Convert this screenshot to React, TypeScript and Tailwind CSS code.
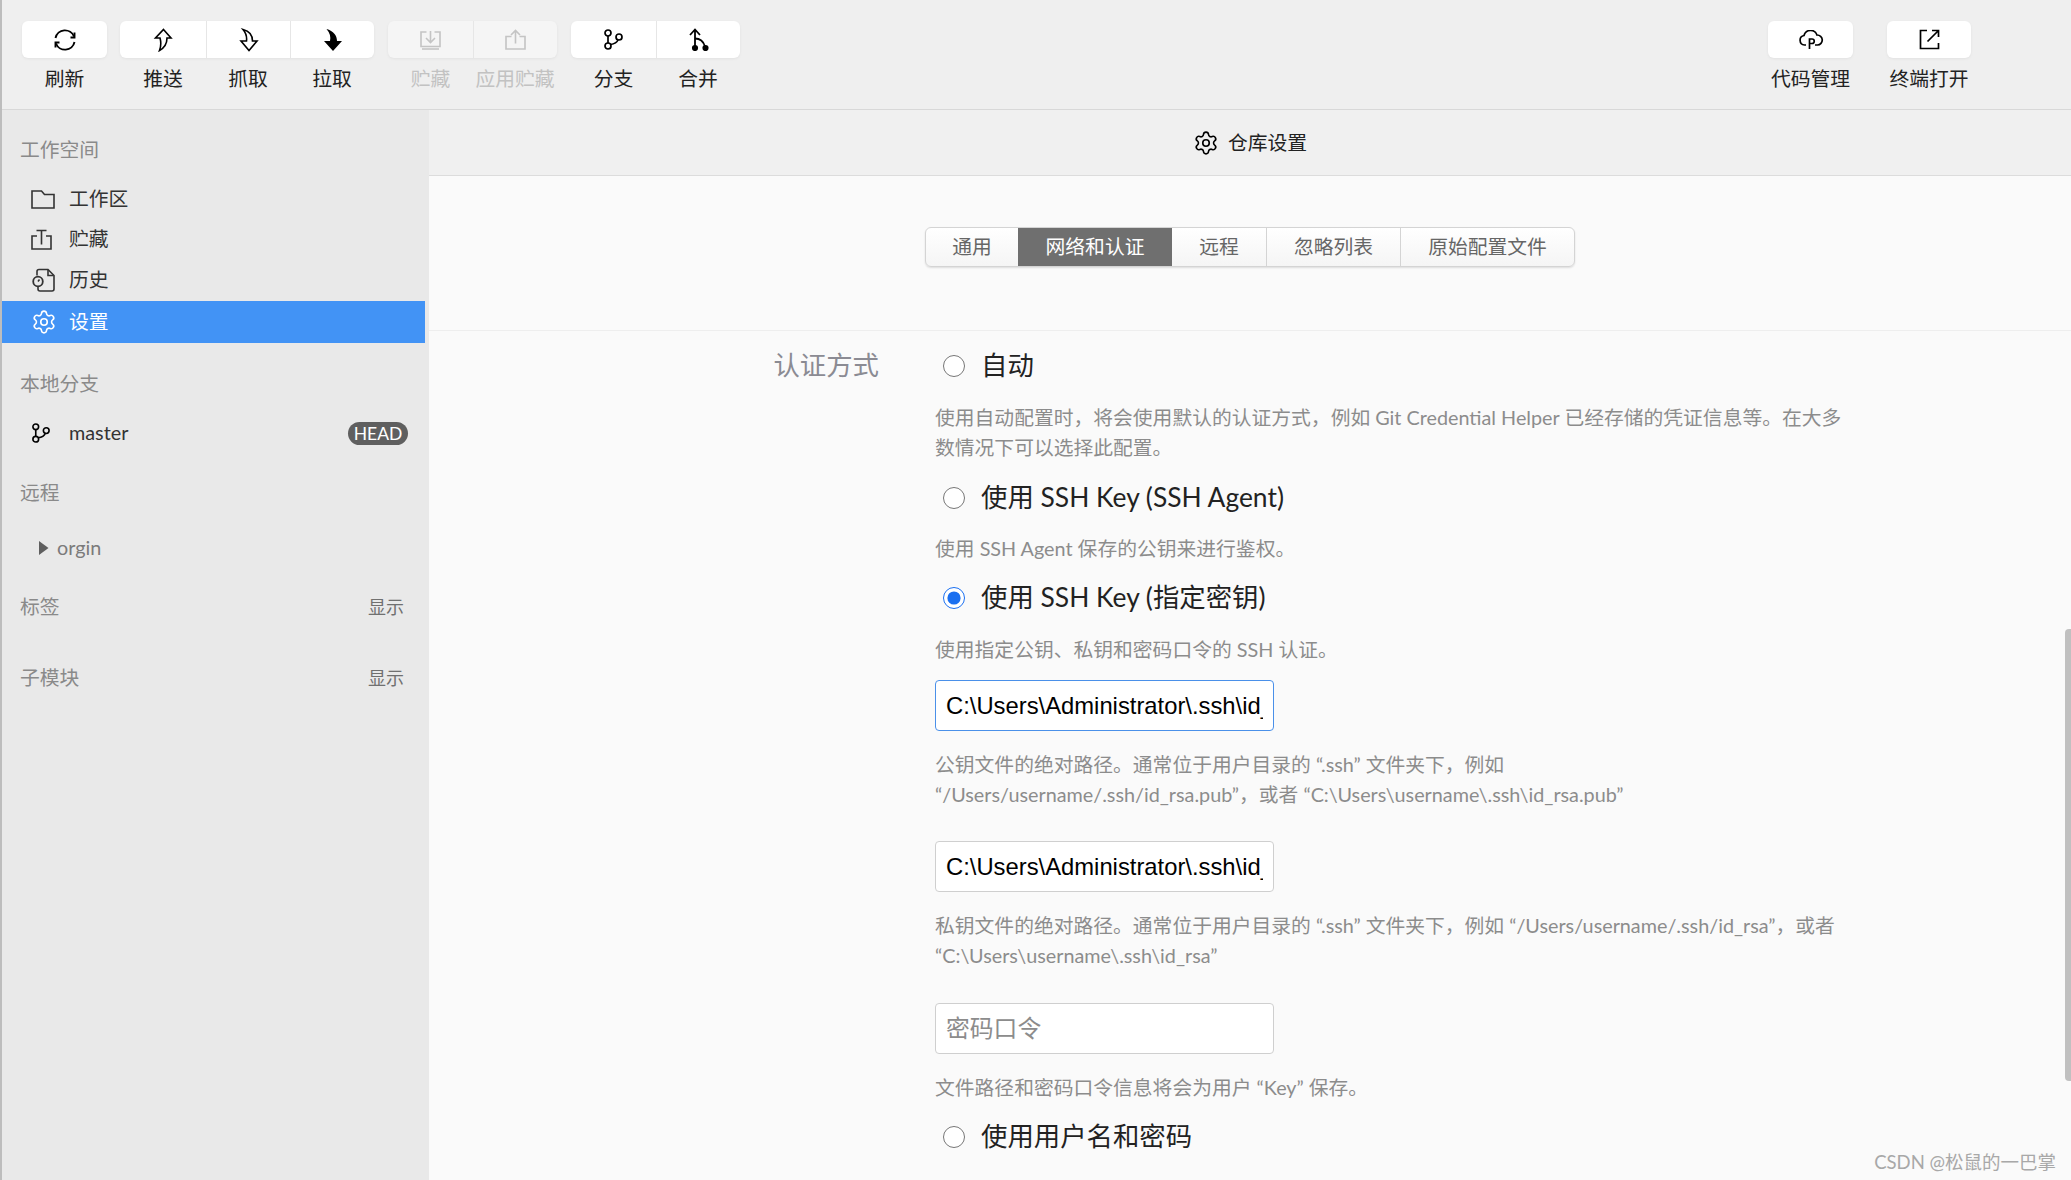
import React from 'react';
import { Settings } from 'lucide-react';

const stroke = { fill: 'none', stroke: 'currentColor', strokeWidth: 1.6 };

const RefreshIcon = () => (
  <svg width="24" height="24" viewBox="0 0 24 24" {...stroke} strokeWidth={1.9}>
    <path d="M2.5 10A9.7 9.7 0 0 1 21 8.5" />
    <path d="M21.5 14A9.7 9.7 0 0 1 3 15.5" />
    <path d="M21.5 4.5v5h-4" />
    <path d="M2.5 19.5v-5h4" />
  </svg>
);
const PushIcon = () => (
  <svg width="20" height="24" viewBox="0 0 20 24" {...stroke}>
    <path d="M10.5 1.5 18 10h-4c0 5-2 9.5-7.5 12.5 1.5-4 1.5-9 .5-12.5H2.5z" />
  </svg>
);
const FetchIcon = () => (
  <svg width="20" height="24" viewBox="0 0 20 24" {...stroke}>
    <path d="M4 1.5C10 3 13.5 7.500 13.500 13H18l-8 9.500L2 13h5.500C8 9 7 5 4 1.500z" />
  </svg>
);
const PullIcon = () => (
  <svg width="20" height="24" viewBox="0 0 20 24" fill="currentColor">
    <path d="M3.500 1C10.500 3 14 7.500 14 13h5l-9 10-9-10h6C8 9 7 5 3.500 1z" />
  </svg>
);
const StashInIcon = () => (
  <svg width="21" height="20" viewBox="0 0 21 20" {...stroke}>
    <path d="M6.500 2H1v14.500h19V2h-5.500" />
    <path d="M2 19h17" />
    <path d="M10.500 1v11M6 8l4.500 4.500L15 8" />
  </svg>
);
const StashOutIcon = () => (
  <svg width="21" height="21" viewBox="0 0 21 21" {...stroke}>
    <path d="M6.500 7.500H1V20h19V7.500h-5.500" />
    <path d="M10.500 14.500V1.500M6 6l4.500-4.500L15 6" />
  </svg>
);
const BranchIcon = ({ size = 21 }: { size?: number }) => (
  <svg width={size} height={size} viewBox="0 0 21 21" {...stroke} strokeWidth={1.7}>
    <circle cx="5" cy="4" r="3" />
    <circle cx="5" cy="17" r="3" />
    <circle cx="16" cy="8" r="3" />
    <path d="M5 7v7M15 11c-1 2.500-4 4-7.500 4.500" />
  </svg>
);
const MergeIcon = () => (
  <svg width="21" height="23" viewBox="0 0 21 23" {...stroke} strokeWidth={1.8}>
    <path d="M7 1.500V19M2 7l5-5.500L12 7" />
    <path d="M7 10.500c4.500 0 8.500 3 10 8" />
    <circle cx="7" cy="20" r="2.200" fill="currentColor" />
    <circle cx="17.500" cy="20" r="2.200" fill="currentColor" />
  </svg>
);
const CloudIcon = () => (
  <svg width="26" height="20" viewBox="0 0 26 20" {...stroke} strokeWidth={1.7}>
    <path d="M8 15H6.500a4.800 4.800 0 0 1-.5-9.500 6.800 6.800 0 0 1 13-.5 5 5 0 0 1 .5 10H17" />
    <path d="M11.500 19V9h2.500a2.200 2.200 0 0 1 0 4.500h-2.500" />
  </svg>
);
const OpenIcon = () => (
  <svg width="21" height="21" viewBox="0 0 21 21" {...stroke} strokeWidth={1.7}>
    <path d="M8 1.500H1.500v18h18V14" />
    <path d="M8.500 12.500 19.500 1.500M13 1.500h6.500V8" />
  </svg>
);
const FolderIcon = () => (
  <svg width="24" height="19" viewBox="0 0 24 19" {...stroke}>
    <path d="M1 1h9.500l3 3.500H23V18H1z" />
  </svg>
);
const StashIcon = () => (
  <svg width="21" height="21" viewBox="0 0 21 21" {...stroke}>
    <path d="M6 7H1v13h19V7h-5" />
    <path d="M10.500 15.500V1.500M5.500 1.500h10" />
  </svg>
);
const HistoryIcon = () => (
  <svg width="24" height="24" viewBox="0 0 24 24" {...stroke}>
    <path d="M5 7.500V3.500a2 2 0 0 1 2-2h9l6 6V21a2 2 0 0 1-2 2H8a2 2 0 0 1-2-2v-2" />
    <path d="M16 2v5.500h5.500" />
    <circle cx="6" cy="13.500" r="4.800" strokeWidth={1.8} />
    <path d="M6 13.500l1.500-2" />
  </svg>
);

const toolbarGroups = [
  [{ label: '刷新', w: 'w-[85px]', icon: <RefreshIcon /> }],
  [
    { label: '推送', w: 'w-[86px]', icon: <PushIcon /> },
    { label: '抓取', w: 'w-[84px]', icon: <FetchIcon /> },
    { label: '拉取', w: 'w-[84px]', icon: <PullIcon /> },
  ],
];
const disabledGroup = [
  { label: '贮藏', w: 'w-[85px]', icon: <StashInIcon /> },
  { label: '应用贮藏', w: 'w-[84px]', icon: <StashOutIcon /> },
];
const branchGroup = [
  { label: '分支', w: 'w-[85px]', icon: <BranchIcon /> },
  { label: '合并', w: 'w-[84px]', icon: <MergeIcon /> },
];

type ToolItem = { label: string; w: string; icon: React.ReactNode };

const ToolGroup = ({ items, disabled }: { items: ToolItem[]; disabled?: boolean }) => (
  <div className="flex flex-col">
    <div className={`flex h-[37px] rounded-md shadow-[0_1px_3px_rgba(0,0,0,0.06)] ${disabled ? 'bg-[#f5f5f5] text-[#c4c4c4]' : 'bg-white text-black'}`}>
      {items.map((item, i) => (
        <div key={item.label} className={`${item.w} flex items-center justify-center ${i > 0 ? 'border-l border-[#e6e6e6]' : ''}`}>
          {item.icon}
        </div>
      ))}
    </div>
    <div className="flex mt-[5px]">
      {items.map(item => (
        <div key={item.label} className={`${item.w} text-center whitespace-nowrap leading-[30px] text-[19.8px] ${disabled ? 'text-[#c2c2c2]' : 'text-[#222]'}`}>
          {item.label}
        </div>
      ))}
    </div>
  </div>
);

const Toolbar = () => (
  <div className="h-[110px] shrink-0 flex items-start pt-[21px] pl-[20px] pr-[100px] bg-[#efefef] border-b border-[#d8d8d8]">
    <div className="flex gap-[13px]">
      {toolbarGroups.map(g => <ToolGroup key={g[0].label} items={g} />)}
    </div>
    <div className="flex gap-[14px] ml-[14px]">
      <ToolGroup items={disabledGroup} disabled />
      <ToolGroup items={branchGroup} />
    </div>
    <div className="flex gap-[34px] ml-auto">
      <ToolGroup items={[{ label: '代码管理', w: 'w-[85px]', icon: <CloudIcon /> }]} />
      <ToolGroup items={[{ label: '终端打开', w: 'w-[84px]', icon: <OpenIcon /> }]} />
    </div>
  </div>
);

const SectionTitle = ({ children, right, className }: { children: React.ReactNode; right?: string; className: string }) => (
  <div className={`h-[30px] pl-[18px] pr-[21px] flex items-center justify-between text-[19.8px] text-[#8a8a8a] ${className}`}>
    <span>{children}</span>
    {right && <span className="text-[18px] text-[#707070]">{right}</span>}
  </div>
);

const NavItem = ({ icon, label, h, active }: { icon: React.ReactNode; label: string; h: string; active?: boolean }) => (
  <div className={`${h} pl-[29px] flex items-center text-[19.8px] ${active ? 'bg-[#4293f5] text-white' : 'text-[#333]'}`}>
    <span className="w-[38px] flex items-center">{icon}</span>
    {label}
  </div>
);

const Sidebar = () => (
  <aside className="w-[427px] shrink-0 bg-[#e9e9e9] pt-[25px] pr-[4px] text-[#333]">
    <SectionTitle className="">工作空间</SectionTitle>
    <div className="mt-[14px]">
      <NavItem h="h-[40px]" icon={<FolderIcon />} label="工作区" />
      <NavItem h="h-[40px]" icon={<StashIcon />} label="贮藏" />
      <NavItem h="h-[42px]" icon={<span className="ml-[1px] flex"><HistoryIcon /></span>} label="历史" />
      <NavItem h="h-[42px]" active icon={<Settings size={26} strokeWidth={1.5} />} label="设置" />
    </div>
    <SectionTitle className="mt-[26px]">本地分支</SectionTitle>
    <div className="mt-[14px] h-[40px] pl-[29px] pr-[17px] flex items-center text-[19.8px] text-[#333]">
      <span className="w-[38px] flex items-center text-black"><BranchIcon size={20} /></span>
      <span className="flex-1">master</span>
      <span className="w-[60px] h-[23px] rounded-full bg-[#5f5f5f] text-white text-[17.5px] leading-[23px] text-center">HEAD</span>
    </div>
    <SectionTitle className="mt-[25px]">远程</SectionTitle>
    <div className="mt-[20px] h-[40px] pl-[37px] flex items-center text-[19.8px] text-[#7b7b7b]">
      <svg width="10" height="14" viewBox="0 0 10 14" fill="#5f5f5f"><path d="M0 0l9.500 7L0 14z" /></svg>
      <span className="ml-[8px]">orgin</span>
    </div>
    <SectionTitle className="mt-[24px]" right="显示">标签</SectionTitle>
    <SectionTitle className="mt-[41px]" right="显示">子模块</SectionTitle>
  </aside>
);

const tabs = [
  { label: '通用', w: 'w-[92px]' },
  { label: '网络和认证', w: 'w-[154px]', active: true },
  { label: '远程', w: 'w-[94px]' },
  { label: '忽略列表', w: 'w-[134px]' },
  { label: '原始配置文件', w: 'w-[174px]' },
];

const Tabs = () => (
  <div className="flex h-[40px] rounded-md border border-[#d4d4d4] shadow-[0_1px_2px_rgba(0,0,0,0.12)] bg-gradient-to-b from-white to-[#f5f5f5] overflow-hidden">
    {tabs.map((t, i) => (
      <div
        key={t.label}
        className={`${t.w} flex items-center justify-center text-[19.8px] ${t.active ? 'bg-[#6f6f6f] text-white' : 'text-[#666]'} ${i > 2 ? 'border-l border-[#d4d4d4]' : ''}`}
      >
        {t.label}
      </div>
    ))}
  </div>
);

const Radio = ({ label, checked, className }: { label: string; checked?: boolean; className: string }) => (
  <label className={`h-[36px] pl-[8px] flex items-center gap-[16px] text-[26.4px] text-[#222] ${className}`}>
    <input type="radio" name="auth" defaultChecked={checked} className="w-[22px] h-[22px] accent-[#1a6ff0]" />
    {label}
  </label>
);

const Desc = ({ children, className }: { children: React.ReactNode; className: string }) => (
  <p className={`text-[19.8px] leading-[30px] text-[#8c8c8c] ${className}`}>{children}</p>
);

const PathInput = ({ value, placeholder, focused, className }: { value?: string; placeholder?: string; focused?: boolean; className: string }) => (
  <input
    readOnly
    value={value}
    placeholder={placeholder}
    className={`block w-[339px] h-[51px] px-[10px] rounded-[4px] bg-white border text-[23.8px] text-black font-['Liberation_Sans',sans-serif] placeholder:text-[#8c8c8c] placeholder:font-['Lato','Noto_Sans_CJK_SC',sans-serif] outline-none ${focused ? 'border-[#4a90e9]' : 'border-[#cfcfcf]'} ${className}`}
  />
);

const SettingsForm = () => (
  <div className="flex">
    <div className="w-[450px] shrink-0 pt-[17px] h-[53px] flex items-center justify-end text-[26.4px] text-[#8b8b93]">认证方式</div>
    <div className="w-[912px] ml-[56px] pt-[17px]">
      <Radio label="自动" className="" />
      <Desc className="mt-[18px]">使用自动配置时，将会使用默认的认证方式，例如 Git Credential Helper 已经存储的凭证信息等。在大多数情况下可以选择此配置。</Desc>
      <Radio label="使用 SSH Key (SSH Agent)" className="mt-[18px]" />
      <Desc className="mt-[17px]">使用 SSH Agent 保存的公钥来进行鉴权。</Desc>
      <Radio label="使用 SSH Key (指定密钥)" checked className="mt-[17px]" />
      <Desc className="mt-[18px]">使用指定公钥、私钥和密码口令的 SSH 认证。</Desc>
      <PathInput value="C:\Users\Administrator\.ssh\id_rsa.pub" focused className="mt-[16px]" />
      <Desc className="mt-[18px]">公钥文件的绝对路径。通常位于用户目录的 “.ssh” 文件夹下，例如<br />“/Users/username/.ssh/id_rsa.pub”，或者 “C:\Users\username\.ssh\id_rsa.pub”</Desc>
      <PathInput value="C:\Users\Administrator\.ssh\id_rsa" className="mt-[32px]" />
      <Desc className="mt-[18px]">私钥文件的绝对路径。通常位于用户目录的 “.ssh” 文件夹下，例如 “/Users/username/.ssh/id_rsa”，或者 “C:\Users\username\.ssh\id_rsa”</Desc>
      <PathInput placeholder="密码口令" className="mt-[33px]" />
      <Desc className="mt-[18px]">文件路径和密码口令信息将会为用户 “Key” 保存。</Desc>
      <Radio label="使用用户名和密码" className="mt-[17px]" />
    </div>
  </div>
);

const Main = () => (
  <main className="relative flex-1 min-w-0 bg-[#fafafa] overflow-hidden">
    <div className="h-[66px] flex items-center justify-center gap-[9px] bg-[#f0f0f0] border-b border-[#dcdcdc] text-[19.8px] text-[#222]">
      <Settings size={26} strokeWidth={1.5} className="text-black" />
      仓库设置
    </div>
    <div className="h-[155px] pt-[51px] flex justify-center border-b border-[#eeeeee]">
      <div><Tabs /></div>
    </div>
    <SettingsForm />
    {/* scrollbar + watermark sit on top of the page */}
    <div className="absolute right-0 top-[519px] w-[6px] h-[452px] rounded-l bg-[#c0c0c0]" />
    <div className="absolute right-[15px] top-[1039px] text-[18.5px] leading-[26px] text-[#a8a8a8] whitespace-nowrap">CSDN @松鼠的一巴掌</div>
  </main>
);

const App = () => (
  <div className="w-[2071px] h-[1180px] flex flex-col overflow-hidden border-l-2 border-[#bdbdbd] font-['Lato','Noto_Sans_CJK_SC',sans-serif]">
    <Toolbar />
    <div className="flex flex-1 min-h-0">
      <Sidebar />
      <Main />
    </div>
  </div>
);

export default App;
